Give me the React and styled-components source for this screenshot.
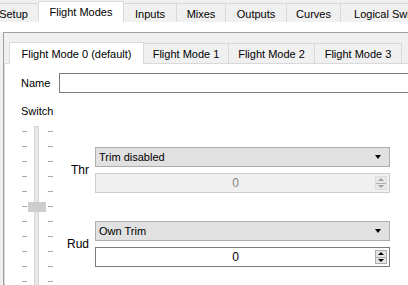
import React from "react";
import styled, { createGlobalStyle } from "styled-components";

const outerTabs = [
  { label: "Setup", width: 51 },
  { label: "Flight Modes", width: 86, active: true },
  { label: "Inputs", width: 54 },
  { label: "Mixes", width: 50 },
  { label: "Outputs", width: 62 },
  { label: "Curves", width: 55 },
  { label: "Logical Switches", width: 110 },
];

const modeTabs = [
  { label: "Flight Mode 0 (default)", width: 135, active: true },
  { label: "Flight Mode 1", width: 86 },
  { label: "Flight Mode 2", width: 87 },
  { label: "Flight Mode 3", width: 88 },
];

const trims = [
  { name: "Thr", mode: "Trim disabled", value: 0, disabled: true },
  { name: "Rud", mode: "Own Trim", value: 0 },
];

const ticks = Array.from({ length: 11 });

export default function App() {
  return (
    <>
      <GlobalStyle />
      <Window>
        <TabBar>
          {outerTabs.map((t) => (
            <OuterTab key={t.label} $width={t.width} $active={t.active}>
              {t.label}
            </OuterTab>
          ))}
        </TabBar>
        <Page>
          <PageTop />
          <Frame>
            <ModeWidget>
              <ModeTabBar>
                {modeTabs.map((t) => (
                  <ModeTab key={t.label} $width={t.width} $active={t.active}>
                    {t.label}
                  </ModeTab>
                ))}
              </ModeTabBar>
              <Pane>
                <NameRow>
                  <Label>Name</Label>
                  <NameField />
                </NameRow>
                <SwitchRow>
                  <Label>Switch</Label>
                </SwitchRow>
                <Lower>
                  <Slider>
                    <TickColumn>
                      {ticks.map((_, i) => (
                        <Tick key={i} />
                      ))}
                    </TickColumn>
                    <Groove />
                    <TickColumn>
                      {ticks.map((_, i) => (
                        <Tick key={i} />
                      ))}
                    </TickColumn>
                    <Handle />
                  </Slider>
                  <TrimList>
                    {trims.map((t) => (
                      <TrimGroup key={t.name}>
                        <TrimLabel>{t.name}</TrimLabel>
                        <TrimStack>
                          <Combo>
                            <span>{t.mode}</span>
                            <ComboArrow />
                          </Combo>
                          <SpinBox $disabled={t.disabled}>
                            <SpinValue>{t.value}</SpinValue>
                            <SpinButtons $disabled={t.disabled}>
                              <SpinButton $disabled={t.disabled}>
                                <ArrowUp $disabled={t.disabled} />
                              </SpinButton>
                              <SpinButton $disabled={t.disabled}>
                                <ArrowDown $disabled={t.disabled} />
                              </SpinButton>
                            </SpinButtons>
                          </SpinBox>
                        </TrimStack>
                      </TrimGroup>
                    ))}
                  </TrimList>
                </Lower>
              </Pane>
            </ModeWidget>
          </Frame>
        </Page>
      </Window>
    </>
  );
}

const GlobalStyle = createGlobalStyle`
  html, body {
    margin: 0;
    padding: 0;
    background: #f0f0f0;
  }
  * {
    box-sizing: border-box;
  }
`;

const Window = styled.div`
  width: 408px;
  height: 285px;
  overflow: hidden;
  display: flex;
  flex-direction: column;
  font-family: "Liberation Sans", Arial, sans-serif;
  font-size: 11px;
  color: #000;
  background: #f0f0f0;
`;

const TabBar = styled.div`
  display: flex;
  align-items: flex-end;
  height: 22px;
  margin-left: -11px;
  flex-shrink: 0;
`;

const OuterTab = styled.div`
  flex-shrink: 0;
  width: ${(p) => p.$width}px;
  height: ${(p) => (p.$active ? 21 : 19)}px;
  display: flex;
  align-items: center;
  justify-content: center;
  white-space: nowrap;
  background: ${(p) => (p.$active ? "#ffffff" : "#f0f0f0")};
  border: 1px solid #d9d9d9;
  border-bottom: none;
  margin-left: -1px;
  padding-top: ${(p) => (p.$active ? 0 : 1)}px;
  position: relative;
  z-index: ${(p) => (p.$active ? 1 : 0)};
`;

const Page = styled.div`
  flex: 1;
  display: flex;
  flex-direction: column;
`;

const PageTop = styled.div`
  height: 10px;
  background: #ffffff;
  flex-shrink: 0;
`;

const Frame = styled.div`
  flex: 1;
  padding-left: 3px;
  display: flex;
`;

const ModeWidget = styled.div`
  flex: 1;
  display: flex;
  flex-direction: column;
  border-top: 1px solid #a0a0a0;
  border-left: 1px solid #a0a0a0;
  background: #f0f0f0;
`;

const ModeTabBar = styled.div`
  display: flex;
  align-items: flex-end;
  height: 30px;
  padding-left: 6px;
  flex-shrink: 0;
`;

const ModeTab = styled.div`
  flex-shrink: 0;
  width: ${(p) => p.$width}px;
  height: ${(p) => (p.$active ? 22 : 20)}px;
  margin-bottom: ${(p) => (p.$active ? -1 : 0)}px;
  display: flex;
  align-items: center;
  justify-content: center;
  white-space: nowrap;
  background: ${(p) => (p.$active ? "#ffffff" : "#f0f0f0")};
  border: 1px solid #d9d9d9;
  border-bottom: none;
  margin-left: -1px;
  position: relative;
  z-index: ${(p) => (p.$active ? 1 : 0)};
`;

const Pane = styled.div`
  flex: 1;
  background: #ffffff;
  border-top: 1px solid #d9d9d9;
  border-left: 1px solid #d9d9d9;
  padding: 9px 0 0 16px;
  display: flex;
  flex-direction: column;
`;

const NameRow = styled.div`
  display: flex;
  align-items: center;
  height: 20px;
`;

const Label = styled.div`
  width: 38px;
  flex-shrink: 0;
  white-space: nowrap;
`;

const NameField = styled.div`
  flex: 1;
  height: 20px;
  border: 1px solid #7a7a7a;
  margin-right: -4px;
  background: #ffffff;
`;

const SwitchRow = styled.div`
  display: flex;
  align-items: center;
  height: 20px;
  margin-top: 8px;
`;

const Lower = styled.div`
  display: flex;
  margin-top: 5px;
  flex: 1;
`;

const Slider = styled.div`
  position: relative;
  display: flex;
  width: 36px;
  padding-left: 1px;
  flex-shrink: 0;
`;

const TickColumn = styled.div`
  display: flex;
  flex-direction: column;
  gap: 14px;
  padding-top: 5px;
  width: 5px;
`;

const Tick = styled.div`
  width: 5px;
  height: 1px;
  background: #a8a8a8;
`;

const Groove = styled.div`
  width: 5px;
  margin: 0 9px 0 7px;
  height: 200px;
  border: 1px solid #d6d6d6;
  background: #e7e7e7;
`;

const Handle = styled.div`
  position: absolute;
  left: 7px;
  top: 76px;
  width: 18px;
  height: 10px;
  background: #cdcdcd;
`;

const TrimList = styled.div`
  flex: 1;
  display: flex;
  flex-direction: column;
  gap: 28px;
  padding-top: 21px;
`;

const TrimGroup = styled.div`
  display: flex;
  align-items: center;
  gap: 6px;
`;

const TrimLabel = styled.div`
  width: 32px;
  text-align: right;
  font-size: 12px;
`;

const TrimStack = styled.div`
  display: flex;
  flex-direction: column;
  gap: 6px;
  width: 295px;
`;

const Combo = styled.div`
  height: 20px;
  display: flex;
  align-items: center;
  justify-content: space-between;
  padding: 0 8px 0 3px;
  background: #e1e1e1;
  border: 1px solid #adadad;
`;

const ComboArrow = styled.div`
  width: 0;
  height: 0;
  border-left: 3.5px solid transparent;
  border-right: 3.5px solid transparent;
  border-top: 4px solid #000;
`;

const SpinBox = styled.div`
  height: 20px;
  display: flex;
  align-items: center;
  background: ${(p) => (p.$disabled ? "#f0f0f0" : "#ffffff")};
  border: 1px solid ${(p) => (p.$disabled ? "#cccccc" : "#7a7a7a")};
  color: ${(p) => (p.$disabled ? "#838383" : "#000")};
  padding-right: 2px;
`;

const SpinValue = styled.div`
  flex: 1;
  text-align: center;
  font-size: 12px;
`;

const SpinButtons = styled.div`
  width: 12px;
  height: 14px;
  display: flex;
  flex-direction: column;
  border: 1px solid ${(p) => (p.$disabled ? "#dcdcdc" : "#adadad")};
`;

const SpinButton = styled.div`
  flex: 1;
  display: flex;
  align-items: center;
  justify-content: center;
  background: ${(p) => (p.$disabled ? "#e8e8e8" : "#e5e5e5")};
  & + & {
    border-top: 1px solid ${(p) => (p.$disabled ? "#dcdcdc" : "#adadad")};
  }
`;

const ArrowUp = styled.div`
  width: 0;
  height: 0;
  border-left: 3px solid transparent;
  border-right: 3px solid transparent;
  border-bottom: 3px solid ${(p) => (p.$disabled ? "#a0a0a0" : "#000")};
`;

const ArrowDown = styled.div`
  width: 0;
  height: 0;
  border-left: 3px solid transparent;
  border-right: 3px solid transparent;
  border-top: 3px solid ${(p) => (p.$disabled ? "#a0a0a0" : "#000")};
`;
